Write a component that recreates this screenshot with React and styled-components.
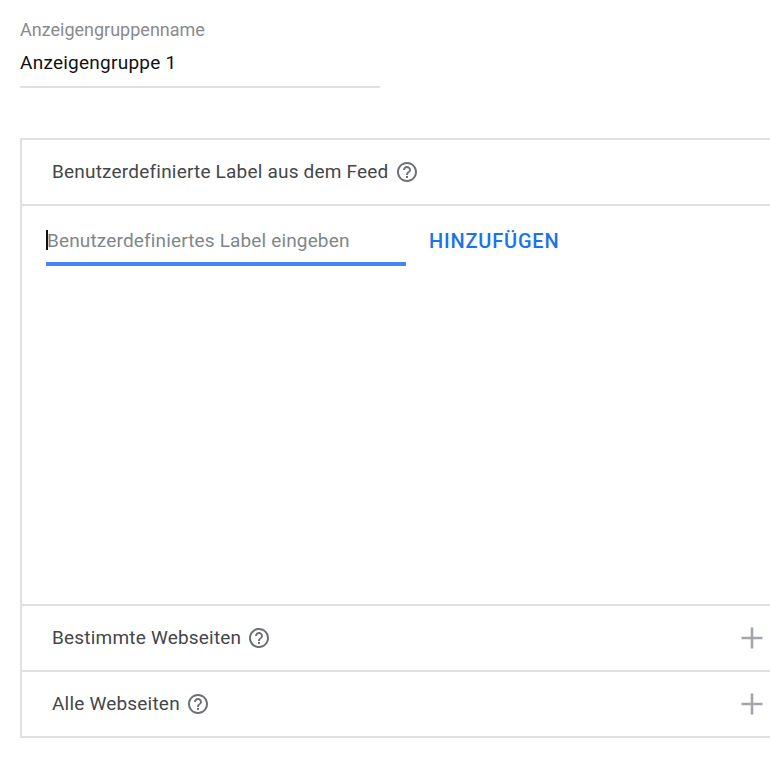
import React from "react";
import styled, { createGlobalStyle } from "styled-components";

const Global = createGlobalStyle`
  html, body { margin: 0; padding: 0; background: #fff; }
  body { font-family: Roboto, "Liberation Sans", sans-serif; overflow: hidden; }
`;
const Page = styled.div`
  width: 770px; height: 776px; box-sizing: border-box; padding: 20px 0 0 20px; overflow: hidden;
`;
const NameField = styled.div`
  width: 360px; height: 68px; box-sizing: border-box; border-bottom: 2px solid #e0e0e0;
`;
const FieldLabel = styled.div`
  font-size: 18px; line-height: 20px; color: #8a8a8e;
`;
const FieldValue = styled.div`
  font-size: 19px; line-height: 24px; margin-top: 11px; color: #111; letter-spacing: 0.25px;
`;
const Panel = styled.div`
  margin-top: 50px; width: 770px; box-sizing: border-box; border: 2px solid #e0e0e0; border-right: none;
`;
const Row = styled.div`
  height: 64px; box-sizing: border-box; padding: 0 26px 0 30px; display: flex; align-items: center;
  & + & { border-top: 2px solid #e0e0e0; height: 66px; }
`;
const Title = styled.span`
  font-size: 19px; color: #444649; letter-spacing: 0.2px; position: relative; top: -1px;
`;
const HelpIcon = styled.svg`
  width: 24px; height: 24px; margin-left: 6px; flex: none;
`;
const Help = () => (
  <HelpIcon viewBox="0 0 24 24" fill="#6e7073">
    <path d="M11 18h2v-2h-2v2zm1-16C6.48 2 2 6.48 2 12s4.48 10 10 10 10-4.48 10-10S17.52 2 12 2zm0 18c-4.41 0-8-3.59-8-8s3.59-8 8-8 8 3.59 8 8-3.59 8-8 8zm0-14c-2.21 0-4 1.79-4 4h2c0-1.1.9-2 2-2s2 .9 2 2c0 2-3 1.75-3 5h2c0-2.25 3-2.5 3-5 0-2.21-1.79-4-4-4z" />
  </HelpIcon>
);
const Plus = styled.svg`
  width: 24px; height: 24px; margin-left: auto; flex: none;
`;
const Body = styled.div`
  height: 402px; box-sizing: border-box; border-top: 2px solid #e0e0e0; border-bottom: 2px solid #e0e0e0;
  padding: 0 0 0 24px; display: flex; align-items: flex-start;
`;
const InputBox = styled.div`
  width: 360px; height: 60px; box-sizing: border-box; border-bottom: 4px solid #4285f4;
  display: flex; align-items: center; padding-top: 12px;
`;
const Caret = styled.span`
  width: 2px; height: 20px; background: #111; flex: none;
`;
const Placeholder = styled.span`
  font-size: 19px; color: #80868b; margin-left: -1px; letter-spacing: 0.15px;
`;
const AddButton = styled.span`
  font-size: 20px; font-weight: 500; color: #1a73e8; margin: 23px 0 0 23px; line-height: 24px; letter-spacing: 0.8px;
`;
const PlusIcon = () => (
  <Plus viewBox="0 0 24 24" fill="#a2a6ac"><path d="M10.7 1.5h2.6v9.2h9.2v2.6h-9.2v9.2h-2.6v-9.2H1.5v-2.6h9.2z" /></Plus>
);

export default function App() {
  return (
    <Page>
      <Global />
      <NameField>
        <FieldLabel>Anzeigengruppenname</FieldLabel>
        <FieldValue>Anzeigengruppe 1</FieldValue>
      </NameField>
      <Panel>
        <Row><Title>Benutzerdefinierte Label aus dem Feed</Title><Help /></Row>
        <Body>
          <InputBox><Caret /><Placeholder>Benutzerdefiniertes Label eingeben</Placeholder></InputBox>
          <AddButton>HINZUFÜGEN</AddButton>
        </Body>
        <Row><Title>Bestimmte Webseiten</Title><Help /><PlusIcon /></Row>
        <Row><Title>Alle Webseiten</Title><Help /><PlusIcon /></Row>
      </Panel>
    </Page>
  );
}
